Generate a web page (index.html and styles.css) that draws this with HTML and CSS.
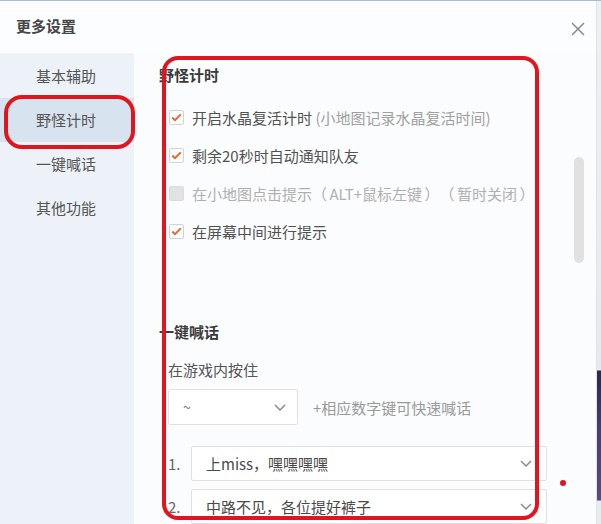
FILE: index.html
```html
<!DOCTYPE html>
<html lang="zh-CN">
<head>
<meta charset="utf-8">
<title>更多设置</title>
<link rel="stylesheet" href="styles.css">
</head>
<body>
<div class="screen">
  <div class="dialog">
    <header class="dlg-head">
      <h1 class="dlg-title">更多设置</h1>
      <span class="close" aria-label="关闭">
        <svg width="14" height="14" viewBox="0 0 14 14"><path d="M1 1L13 13M13 1L1 13" stroke="#8a8a8a" stroke-width="1.5" fill="none"/></svg>
      </span>
    </header>
    <div class="dlg-body">
      <nav class="side">
        <div class="side-item">基本辅助</div>
        <div class="side-item active">野怪计时</div>
        <div class="side-item">一键喊话</div>
        <div class="side-item">其他功能</div>
      </nav>
      <main class="content">
        <h2 class="sec-title">野怪计时</h2>
        <div class="checks">
          <label class="check-row"><span class="cb checked"><svg width="11" height="9" viewBox="0 0 11 9"><path d="M1.2 4.6L4 7.2L9.8 1.4" stroke="#e3692c" stroke-width="2" fill="none"/></svg></span><span class="lbl">开启水晶复活计时</span><span class="note">&nbsp;(小地图记录水晶复活时间)</span></label>
          <label class="check-row"><span class="cb checked"><svg width="11" height="9" viewBox="0 0 11 9"><path d="M1.2 4.6L4 7.2L9.8 1.4" stroke="#e3692c" stroke-width="2" fill="none"/></svg></span><span class="lbl">剩余20秒时自动通知队友</span></label>
          <label class="check-row disabled"><span class="cb"></span><span class="lbl">在小地图点击提示（&#8198;ALT+鼠标左键&#8198;）（&#8198;暂时关闭&#8198;）</span></label>
          <label class="check-row"><span class="cb checked"><svg width="11" height="9" viewBox="0 0 11 9"><path d="M1.2 4.6L4 7.2L9.8 1.4" stroke="#e3692c" stroke-width="2" fill="none"/></svg></span><span class="lbl">在屏幕中间进行提示</span></label>
        </div>

        <h2 class="sec-title sec-gap">一键喊话</h2>
        <p class="hold-label">在游戏内按住</p>
        <div class="key-row">
          <div class="select key-select"><span class="sel-val">~</span><svg class="chev" width="12" height="7" viewBox="0 0 12 7"><path d="M1 1L6 6L11 1" stroke="#8c8c8c" stroke-width="1.5" fill="none"/></svg></div>
          <span class="hint">+相应数字键可快速喊话</span>
        </div>
        <div class="phrase-row first">
          <span class="num">1.</span>
          <div class="select phrase"><span class="sel-val dark">上miss，嘿嘿嘿嘿</span><svg class="chev" width="12" height="7" viewBox="0 0 12 7"><path d="M1 1L6 6L11 1" stroke="#8c8c8c" stroke-width="1.5" fill="none"/></svg></div>
        </div>
        <div class="phrase-row">
          <span class="num">2.</span>
          <div class="select phrase"><span class="sel-val dark">中路不见，各位提好裤子</span><svg class="chev" width="12" height="7" viewBox="0 0 12 7"><path d="M1 1L6 6L11 1" stroke="#8c8c8c" stroke-width="1.5" fill="none"/></svg></div>
        </div>
      </main>
      <div class="scroll-thumb"></div>
    </div>
  </div>
  <div class="backdrop"></div>

  <div class="mark mark-side"></div>
  <div class="mark mark-main"></div>
  <div class="mark-dot"></div>
</div>
</body>
</html>
```
FILE: styles.css
```css
* { box-sizing: border-box; }
html, body { margin: 0; padding: 0; }
body {
  font-family: "Noto Sans CJK SC", "Noto Sans", sans-serif;
  font-size: 15px;
  color: #4a4a4a;
  background: #fff;
  text-spacing-trim: space-all;
}
.screen {
  position: relative;
  display: flex;
  width: 601px;
  height: 524px;
  overflow: hidden;
  border-top: 1px solid #a8bdcf;
}
.dialog {
  width: 597px;
  height: 523px;
  display: flex;
  flex-direction: column;
  background: #fcfdfe;
  border-right: 1px solid #dfe3e8;
}
.backdrop {
  flex: 1;
  background: linear-gradient(to bottom, #eef1f4 0, #e6eaee 369px, #2c2650 370px, #4a3d72 430px, #5d4a7a 499px, #e9ecef 500px);
}
.dlg-head {
  height: 52px;
  flex: none;
  display: flex;
  align-items: center;
  justify-content: space-between;
  padding: 0 11px 0 16px;
}
.dlg-title {
  margin: 0 0 2px 0;
  font-size: 15px;
  font-weight: 600;
  color: #454545;
  line-height: 20px;
}
.close {
  display: flex;
  margin-top: 4px;
}
.dlg-body {
  position: relative;
  flex: 1;
  display: flex;
  min-height: 0;
}
.side {
  width: 134px;
  flex: none;
  background: #edf2f8;
  padding-top: 1px;
}
.side-item {
  height: 44px;
  line-height: 44px;
  padding-left: 36px;
  color: #555;
}
.side-item.active {
  background: #d7e3ef;
}
.content {
  flex: 1;
  background: #fbfcfd;
  padding: 12px 0 0 25px;
  overflow: hidden;
}
.sec-title {
  margin: 0;
  font-size: 15px;
  font-weight: 700;
  line-height: 20px;
  color: #3a3a3a;
}
.sec-gap { margin-top: 72px; }
.checks { margin-top: 13px; }
.check-row {
  display: flex;
  align-items: center;
  height: 38px;
  padding-left: 10px;
  white-space: nowrap;
}
.cb {
  width: 15px;
  height: 15px;
  border: 1px solid #d3d3d3;
  border-radius: 2px;
  background: #fff;
  display: flex;
  align-items: center;
  justify-content: center;
  margin-right: 8px;
  flex: none;
}
.disabled .cb {
  background: #e2e2e2;
  border-color: #dcdcdc;
}
.lbl { color: #525252; }
.disabled .lbl { color: #b0b0b0; }
.note { color: #a0a0a0; }
.hold-label {
  margin: 18px 0 0 9px;
  line-height: 20px;
  color: #555;
}
.key-row {
  display: flex;
  align-items: center;
  margin: 9px 0 0 9px;
}
.select {
  display: flex;
  align-items: center;
  justify-content: space-between;
  border: 1px solid #e1e1e1;
  border-radius: 2px;
  background: #fff;
}
.key-select {
  width: 130px;
  height: 36px;
  padding: 0 11px 0 14px;
}
.sel-val { color: #777; font-size: 14px; }
.sel-val.dark { color: #4a4a4a; font-size: 15px; }
.hint {
  margin-left: 15px;
  color: #9a9a9a;
}
.phrase-row {
  display: flex;
  align-items: center;
  margin: 8px 0 0 9px;
}
.phrase-row.first { margin-top: 21px; }
.num {
  width: 23px;
  flex: none;
  color: #666;
}
.phrase {
  width: 356px;
  height: 35px;
  padding: 0 14px 0 14px;
}
.scroll-thumb {
  position: absolute;
  left: 574px;
  top: 104px;
  width: 10px;
  height: 106px;
  border-radius: 5px;
  background: #e1e1e1;
}
.mark {
  position: absolute;
  border: 4px solid #e1151f;
  pointer-events: none;
}
.mark-side {
  left: 4px;
  top: 94px;
  width: 131px;
  height: 54px;
  border-radius: 18px;
}
.mark-main {
  left: 162px;
  top: 55px;
  width: 377px;
  height: 464px;
  border-radius: 16px;
}
.mark-dot {
  position: absolute;
  left: 560px;
  top: 479px;
  width: 6px;
  height: 6px;
  border-radius: 50%;
  background: #e1151f;
}
```
